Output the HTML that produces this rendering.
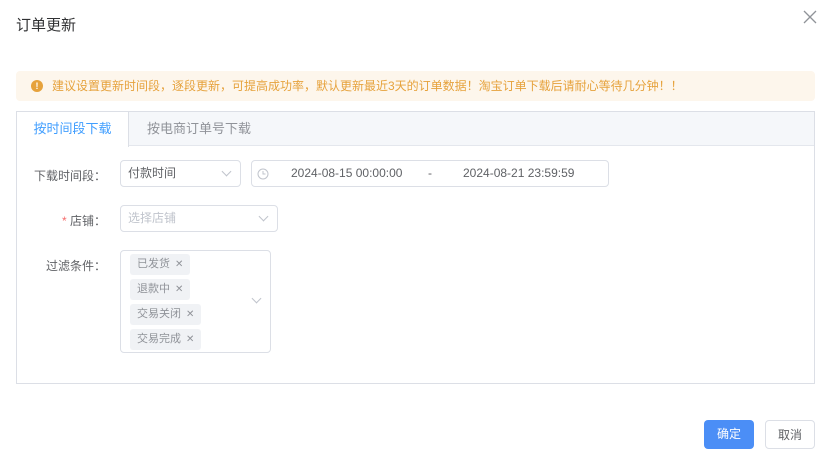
<!DOCTYPE html>
<html><head><meta charset="utf-8"><style>
*{box-sizing:border-box;margin:0;padding:0}
body{width:830px;height:466px;background:#fff;font-family:"Liberation Sans","Noto Sans CJK SC",sans-serif;position:relative;overflow:hidden;color:#606266}
.a{position:absolute}
.title{left:16px;top:15px;font-size:15px;color:#303133;line-height:22px}
.alert{left:16px;top:71px;width:799px;height:30px;background:#fdf6ec;border-radius:4px;color:#e6a23c;font-size:12px;line-height:30px;padding-left:36px}
.alert .ic{position:absolute;left:15px;top:9px;width:12px;height:12px;border-radius:50%;background:#e6a23c;color:#fff;font-size:9px;line-height:12px;text-align:center;font-weight:bold}
.card{left:16px;top:111px;width:799px;height:273px;border:1px solid #dcdfe6}
.hd{position:absolute;left:0;top:0;width:797px;height:34px;background:#f5f7fa;border-bottom:1px solid #e4e7ed}
.tab{position:absolute;top:0;height:35px;line-height:34px;font-size:13px}
.t1{left:0;width:112px;background:#fff;color:#409eff;text-align:center;border-right:1px solid #dcdfe6}
.t2{left:130px;color:#909399}
.lbl{font-size:12px;color:#606266;text-align:right;width:90px;left:16px}
.box{border:1px solid #dcdfe6;border-radius:4px;background:#fff;font-size:12px}
.chev{position:absolute;width:7px;height:7px;border-right:1px solid #c0c4cc;border-bottom:1px solid #c0c4cc;transform:rotate(45deg)}
.tag{position:absolute;left:9px;height:21px;background:#f0f2f5;border-radius:3px;font-size:11px;color:#909399;line-height:21px;padding:0 7px}
.tag i{font-style:normal;margin-left:5px;font-size:10px}
.btn{top:420px;height:29px;width:50px;border-radius:4px;font-size:12px;text-align:center;line-height:29px}
</style></head><body>
<div class="a title">订单更新</div>
<svg class="a" style="left:803px;top:10px" width="14" height="14"><path d="M1 1L13 13M13 1L1 13" stroke="#909399" stroke-width="1.3"/></svg>
<div class="a alert"><span class="ic">!</span>建议设置更新时间段，逐段更新，可提高成功率，默认更新最近3天的订单数据！淘宝订单下载后请耐心等待几分钟！！</div>
<div class="a card">
<div class="hd"></div>
<div class="tab t1">按时间段下载</div>
<div class="tab t2">按电商订单号下载</div>
</div>
<div class="a lbl" style="top:167px">下载时间段：</div>
<div class="a box" style="left:120px;top:160px;width:121px;height:27px;line-height:25px;padding-left:7px;color:#606266">付款时间<span class="chev" style="right:10px;top:7px"></span></div>
<div class="a box" style="left:251px;top:160px;width:358px;height:27px;line-height:25px;color:#606266">
<svg class="a" style="left:5px;top:7px" width="12" height="12"><circle cx="6" cy="6" r="5" fill="none" stroke="#c0c4cc"/><path d="M6 3V6H8.5" fill="none" stroke="#c0c4cc"/></svg>
<span class="a" style="left:39px">2024-08-15 00:00:00</span><span class="a" style="left:176px">-</span><span class="a" style="left:211px">2024-08-21 23:59:59</span></div>
<div class="a lbl" style="top:212px"><span style="color:#f56c6c">*</span> 店铺：</div>
<div class="a box" style="left:120px;top:205px;width:158px;height:27px;line-height:25px;padding-left:7px;color:#c0c4cc">选择店铺<span class="chev" style="right:10px;top:7px"></span></div>
<div class="a lbl" style="top:257px">过滤条件：</div>
<div class="a box" style="left:120px;top:250px;width:151px;height:103px">
<div class="tag" style="top:3px">已发货<i>✕</i></div>
<div class="tag" style="top:28px">退款中<i>✕</i></div>
<div class="tag" style="top:53px">交易关闭<i>✕</i></div>
<div class="tag" style="top:78px">交易完成<i>✕</i></div>
<span class="chev" style="right:10px;top:44px"></span>
</div>
<div class="a btn" style="left:704px;background:#4b8ef6;color:#fff">确定</div>
<div class="a btn" style="left:765px;border:1px solid #dcdfe6;color:#606266">取消</div>
</body></html>
